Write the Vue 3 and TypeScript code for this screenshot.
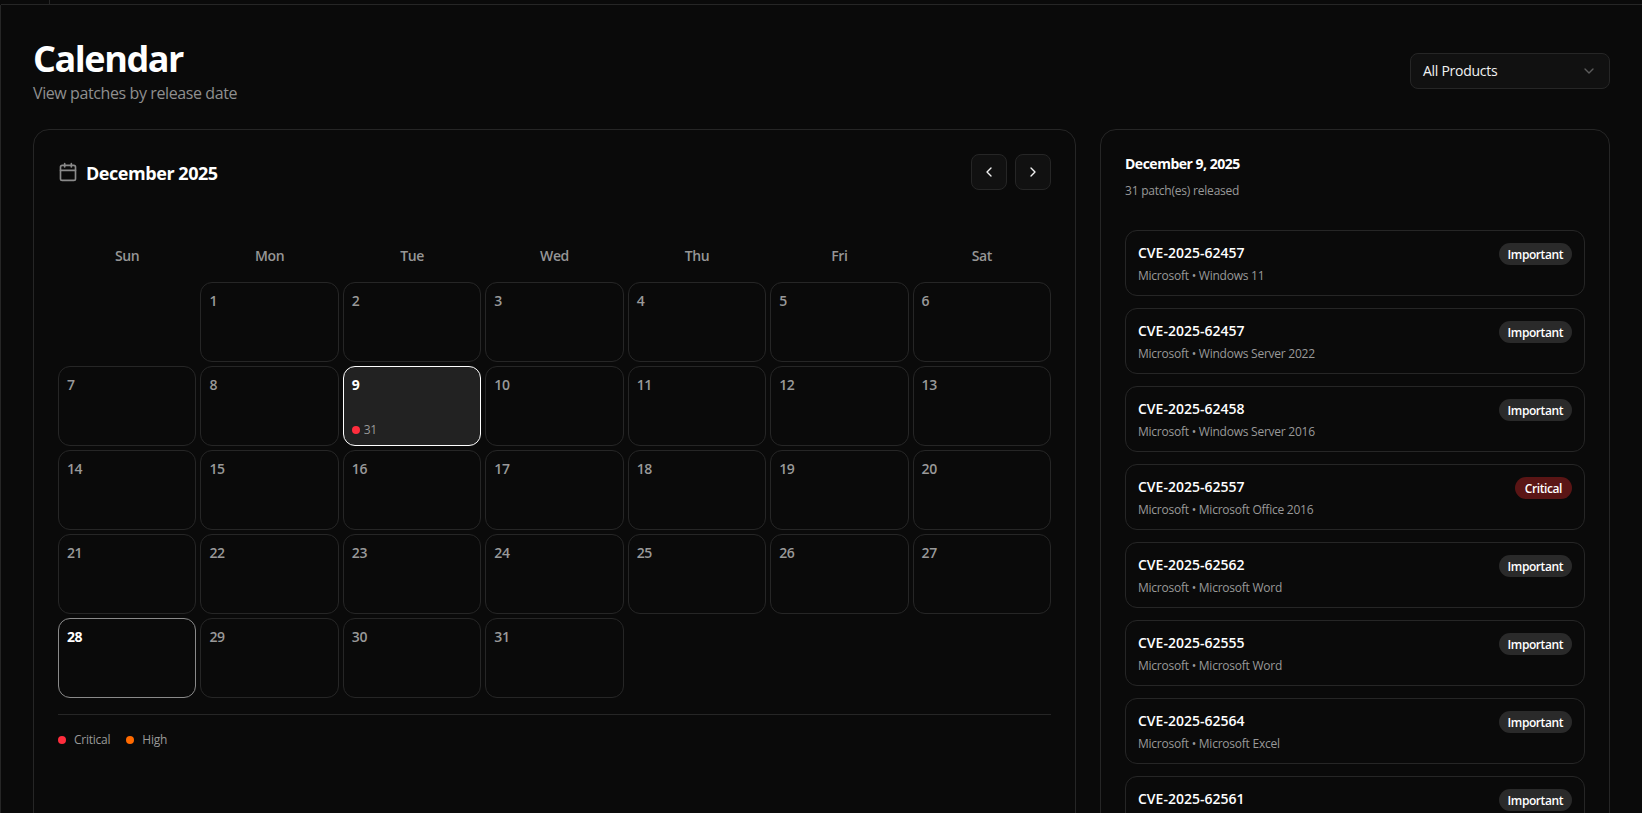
<script setup lang="ts">
interface Patch {
  cve: string
  product: string
  severity: 'Important' | 'Critical'
}

const weekdays = ['Sun', 'Mon', 'Tue', 'Wed', 'Thu', 'Fri', 'Sat']
const days: number[] = Array.from({ length: 31 }, (_, i) => i + 1)

const patches: Patch[] = [
  { cve: 'CVE-2025-62457', product: 'Windows 11', severity: 'Important' },
  { cve: 'CVE-2025-62457', product: 'Windows Server 2022', severity: 'Important' },
  { cve: 'CVE-2025-62458', product: 'Windows Server 2016', severity: 'Important' },
  { cve: 'CVE-2025-62557', product: 'Microsoft Office 2016', severity: 'Critical' },
  { cve: 'CVE-2025-62562', product: 'Microsoft Word', severity: 'Important' },
  { cve: 'CVE-2025-62555', product: 'Microsoft Word', severity: 'Important' },
  { cve: 'CVE-2025-62564', product: 'Microsoft Excel', severity: 'Important' },
  { cve: 'CVE-2025-62561', product: 'Microsoft Excel', severity: 'Important' }
]
</script>

<template>
  <div class="shell">
    <div class="topbar"><span class="topbar-cell"></span></div>
    <main class="main">
      <header class="page-head">
        <div>
          <h1 class="title">Calendar</h1>
          <p class="subtitle">View patches by release date</p>
        </div>
        <div class="select">
          <span>All Products</span>
          <svg class="chev" width="16" height="16" viewBox="0 0 24 24" fill="none" stroke="currentColor" stroke-width="2" stroke-linecap="round" stroke-linejoin="round"><path d="m6 9 6 6 6-6" /></svg>
        </div>
      </header>

      <div class="columns">
        <section class="card cal-card">
          <div class="cal-head">
            <div class="cal-title">
              <svg class="cal-icon" width="20" height="20" viewBox="0 0 24 24" fill="none" stroke="currentColor" stroke-width="2" stroke-linecap="round" stroke-linejoin="round"><path d="M8 2v4" /><path d="M16 2v4" /><rect x="3" y="4" width="18" height="18" rx="2" /><path d="M3 10h18" /></svg>
              <h2>December 2025</h2>
            </div>
            <div class="nav">
              <button class="nav-btn" type="button"><svg width="16" height="16" viewBox="0 0 24 24" fill="none" stroke="currentColor" stroke-width="2" stroke-linecap="round" stroke-linejoin="round"><path d="m15 18-6-6 6-6" /></svg></button>
              <button class="nav-btn" type="button"><svg width="16" height="16" viewBox="0 0 24 24" fill="none" stroke="currentColor" stroke-width="2" stroke-linecap="round" stroke-linejoin="round"><path d="m9 18 6-6-6-6" /></svg></button>
            </div>
          </div>

          <div class="weekdays">
            <div v-for="w in weekdays" :key="w" class="weekday">{{ w }}</div>
          </div>
          <div class="grid">
            <div class="blank"></div>
            <div
              v-for="d in days"
              :key="d"
              class="day"
              :class="{ selected: d === 9, today: d === 28 }"
            >
              <span class="num">{{ d }}</span>
              <span v-if="d === 9" class="count"><i class="dot red"></i>31</span>
            </div>
          </div>
          <div class="legend">
            <span class="legend-item"><i class="dot red"></i>Critical</span>
            <span class="legend-item"><i class="dot orange"></i>High</span>
          </div>
        </section>

        <aside class="card side-card">
          <h3 class="side-title">December 9, 2025</h3>
          <p class="side-sub">31 patch(es) released</p>
          <div class="list">
            <article v-for="(p, i) in patches" :key="i" class="item">
              <div class="item-text">
                <div class="cve">{{ p.cve }}</div>
                <div class="meta">Microsoft • {{ p.product }}</div>
              </div>
              <span class="badge" :class="{ critical: p.severity === 'Critical' }">{{ p.severity }}</span>
            </article>
          </div>
        </aside>
      </div>
    </main>
  </div>
</template>

<style>
html, body {
  margin: 0;
  height: 100%;
  overflow: hidden;
  background: #0a0a0a;
}
</style>

<style scoped>
* { box-sizing: border-box; }

.shell {
  height: 100vh;
  overflow: hidden;
  background: #0a0a0a;
  color: #fff;
  font-family: "Open Sans", "Noto Sans", "Liberation Sans", sans-serif;
  letter-spacing: -0.025em;
}

.topbar {
  height: 5px;
  border-bottom: 1px solid #262626;
  margin-left: 1px;
}
.topbar-cell {
  display: block;
  width: 49px;
  height: 4px;
  border-right: 1px solid #262626;
}

.main {
  padding: 33px 32px 0 32px;
  border-left: 1px solid #262626;
}

.page-head {
  display: flex;
  justify-content: space-between;
  align-items: flex-start;
  margin-bottom: 24px;
}
.title {
  margin: 0;
  font-size: 36px;
  line-height: 42px;
  font-weight: 700;
  letter-spacing: -0.04em;
}
.subtitle {
  margin: 1px 0 0;
  font-size: 16px;
  line-height: 24px;
  color: #8f8f8f;
}

.select {
  margin-top: 15px;
  width: 200px;
  height: 36px;
  display: flex;
  align-items: center;
  justify-content: space-between;
  padding: 0 12px;
  background: #111;
  border: 1px solid #262626;
  border-radius: 8px;
  font-size: 14px;
  color: #f2f2f2;
}
.select span { margin-top: -1px; letter-spacing: -0.02em; }
.chev { color: #5c5c5c; }

.columns {
  display: grid;
  grid-template-columns: 1fr 510px;
  gap: 24px;
  align-items: start;
}

.card {
  border: 1px solid #262626;
  border-radius: 16px;
  padding: 24px;
  background: #0a0a0a;
}
.cal-card { min-height: 900px; }

.cal-head {
  display: flex;
  justify-content: space-between;
  align-items: center;
  height: 36px;
  margin-bottom: 56px;
}
.cal-title {
  display: flex;
  align-items: center;
  gap: 8px;
}
.cal-icon { color: #8a8a8a; }
.cal-title h2 {
  margin: 1px 0 0;
  font-size: 18px;
  line-height: 28px;
  font-weight: 700;
  letter-spacing: -0.025em;
}
.nav { display: flex; gap: 8px; }
.nav-btn {
  width: 36px;
  height: 36px;
  padding: 0;
  display: flex;
  align-items: center;
  justify-content: center;
  background: #111;
  border: 1px solid #262626;
  border-radius: 8px;
  color: #f2f2f2;
}

.weekdays {
  display: grid;
  grid-template-columns: repeat(7, 1fr);
  gap: 4px;
  margin-bottom: 16px;
}
.weekday {
  text-align: center;
  font-size: 14px;
  line-height: 20px;
  font-weight: 600;
  color: #969696;
}

.grid {
  display: grid;
  grid-template-columns: repeat(7, 1fr);
  grid-auto-rows: 80px;
  gap: 4px;
  padding-bottom: 16px;
  border-bottom: 1px solid #262626;
}
.day {
  position: relative;
  border: 1px solid #262626;
  border-radius: 12px;
  padding: 8px;
  display: flex;
  flex-direction: column;
  justify-content: space-between;
}
.num {
  font-size: 14px;
  line-height: 20px;
  font-weight: 600;
  color: #999;
}
.day.selected {
  background: #222;
  border-color: #fff;
}
.day.today { border-color: #8a8a8a; }
.day.selected .num, .day.today .num { color: #fff; font-weight: 700; }

.count {
  display: flex;
  align-items: center;
  gap: 4px;
  margin-bottom: -1px;
  font-size: 12px;
  line-height: 16px;
  color: #999;
}
.dot {
  display: inline-block;
  width: 8px;
  height: 8px;
  border-radius: 50%;
  flex: none;
}
.dot.red { background: #ff2d3d; }
.dot.orange { background: #ff6a00; }

.legend {
  display: flex;
  gap: 16px;
  padding-top: 17px;
}
.legend-item {
  display: flex;
  align-items: center;
  gap: 8px;
  font-size: 12px;
  line-height: 16px;
  color: #999;
  letter-spacing: -0.02em;
}

.side-title {
  margin: 0;
  font-size: 14px;
  line-height: 20px;
  font-weight: 700;
  letter-spacing: -0.035em;
}
.side-sub {
  margin: 9px 0 0;
  font-size: 12px;
  line-height: 16px;
  color: #999;
  letter-spacing: -0.018em;
}
.list {
  display: flex;
  flex-direction: column;
  gap: 12px;
  margin-top: 31px;
}
.item {
  height: 66px;
  display: flex;
  justify-content: space-between;
  align-items: flex-start;
  padding: 12px;
  border: 1px solid #262626;
  border-radius: 12px;
}
.cve {
  font-size: 14px;
  line-height: 20px;
  font-weight: 600;
  letter-spacing: 0;
}
.meta {
  margin-top: 5px;
  font-size: 12px;
  line-height: 16px;
  color: #999;
  letter-spacing: -0.02em;
}
.badge {
  height: 22px;
  padding: 0 9px;
  display: inline-flex;
  align-items: center;
  border-radius: 11px;
  background: #2a2a2a;
  font-size: 12px;
  font-weight: 600;
  letter-spacing: -0.035em;
  color: #fff;
}
.badge.critical { background: #5a1515; padding: 0 10px; }
</style>
